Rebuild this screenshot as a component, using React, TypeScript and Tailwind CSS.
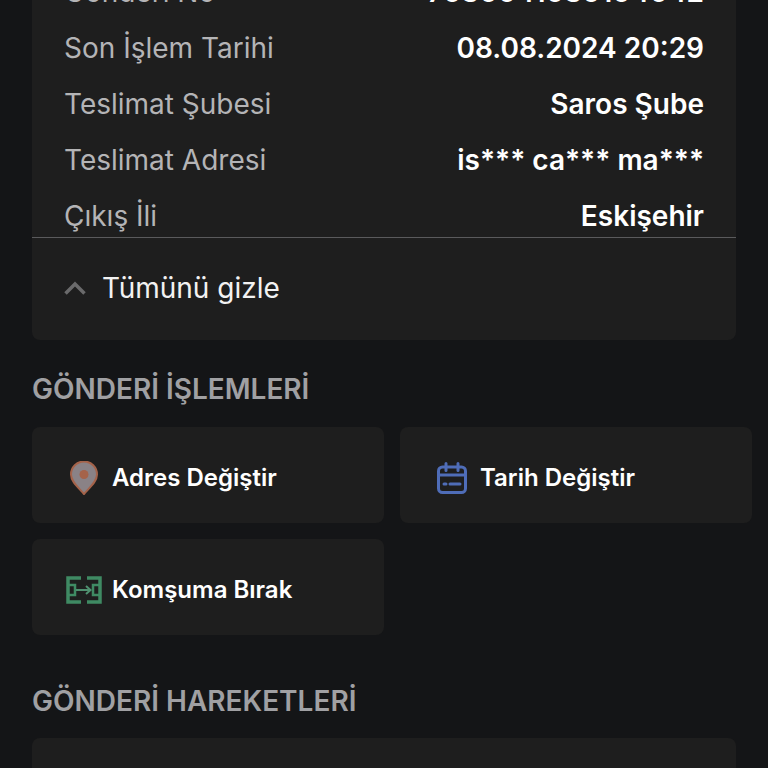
import type { ReactNode } from 'react';

const ROWS = [
  { label: 'Gönderi No', value: '7030041030104042' },
  { label: 'Son İşlem Tarihi', value: '08.08.2024 20:29' },
  { label: 'Teslimat Şubesi', value: 'Saros Şube' },
  { label: 'Teslimat Adresi', value: 'is*** ca*** ma***' },
  { label: 'Çıkış İli', value: 'Eskişehir' },
];

function PinIcon() {
  return (
    <svg width="28" height="34" viewBox="0 0 28 34">
      <path d="M14 33C9 27 1 21 1 13.5a13 13 0 0 1 26 0C27 21 19 27 14 33Z" fill="#8a8286" stroke="#a5634a" strokeWidth="2" />
      <circle cx="14" cy="13.5" r="4.5" fill="#a5634a" />
    </svg>
  );
}

function CalendarIcon() {
  return (
    <svg width="30" height="32" viewBox="0 0 30 32" fill="none" stroke="#4f6db8" strokeWidth="3" strokeLinecap="round">
      <rect x="1.5" y="5" width="27" height="25.5" rx="4" />
      <path d="M9 1.5v7M21 1.5v7M1.5 13h27M7 22h2M13 22h10" />
    </svg>
  );
}

function SwapIcon() {
  return (
    <svg width="36" height="28" viewBox="0 0 36 28" fill="none" stroke="#3f8a63" strokeWidth="3.5">
      <path d="M15 2H2v24h13M21 2h13v24H21" />
      <path d="M2 9h7v10H2M34 9h-7v10h7" strokeWidth="2.5" />
      <path d="M10 14h14" stroke="#4f8f6f" strokeWidth="2" />
      <path d="M20 10l4.500 4-4.500 4" stroke="#4f8f6f" strokeWidth="2" />
    </svg>
  );
}

function ActionCard({ icon, label }: { icon: ReactNode; label: string }) {
  return (
    <div className="flex h-24 items-center rounded-lg bg-[#1e1e1e] pt-1.5 pl-8">
      <div className="flex w-[40px] shrink-0 items-center justify-center">{icon}</div>
      <span className="ml-2 text-[24px] font-semibold text-white">{label}</span>
    </div>
  );
}

function SectionTitle({ children }: { children: ReactNode }) {
  return <p className="text-[28px] leading-8 font-semibold text-[#a0a0a3]">{children}</p>;
}

export default function App() {
  return (
    <div className="h-[768px] w-[768px] overflow-hidden bg-[#141517] font-['Inter','Noto_Sans',sans-serif]">
      <div className="-mt-[28px] px-8">
        {/* gönderi detayı */}
        <div className="rounded-b-lg bg-[#1e1e1e]">
          <div className="flex flex-col gap-4 px-8">
            {ROWS.map((row) => (
              <div key={row.label} className="flex h-10 items-center justify-between text-[28px]">
                <span className="text-[#b4b4b6]">{row.label}</span>
                <span className="font-semibold text-white">{row.value}</span>
              </div>
            ))}
          </div>
          <div className="mt-px flex h-[103px] items-center border-t border-[#5a5a5c] px-8 pb-0.5">
            <svg width="22" height="14" viewBox="0 0 22 14" fill="none" stroke="#6a6a6b" strokeWidth="3.5">
              <path d="M1.5 12.5 11 3l9.500 9.500" />
            </svg>
            <span className="ml-4 text-[28px] text-[#f2f2f2]">Tümünü gizle</span>
          </div>
        </div>

        <div className="mt-[33px]">
          <SectionTitle>GÖNDERİ İŞLEMLERİ</SectionTitle>
          <div className="mt-[22px] grid w-[720px] grid-cols-2 gap-4">
            <ActionCard icon={<PinIcon />} label="Adres Değiştir" />
            <ActionCard icon={<CalendarIcon />} label="Tarih Değiştir" />
            <ActionCard icon={<SwapIcon />} label="Komşuma Bırak" />
          </div>
        </div>

        <div className="mt-[50px]">
          <SectionTitle>GÖNDERİ HAREKETLERİ</SectionTitle>
          <div className="mt-[21px] h-40 rounded-lg bg-[#1e1e1e]" />
        </div>
      </div>
    </div>
  );
}
